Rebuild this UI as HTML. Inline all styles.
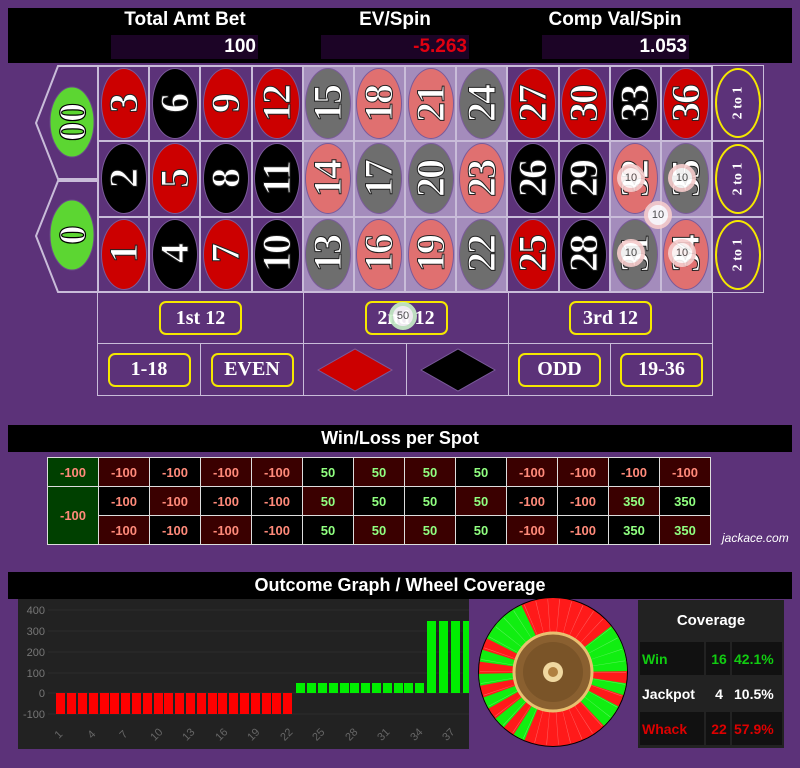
<!DOCTYPE html>
<html><head><meta charset="utf-8">
<style>
*{box-sizing:border-box;margin:0;padding:0}
body{width:800px;height:768px;background:#5c3279;position:relative;overflow:hidden;font-family:"Liberation Sans",sans-serif}
.abs{position:absolute}
.hdr{left:8px;top:8px;width:784px;height:55px;background:#000}
.lbl{color:#fff;font-weight:bold;font-size:19px;top:9px;text-align:center}
.val{top:35px;height:24px;background:#1c0426;color:#fff;font-weight:bold;font-size:19px;text-align:right;line-height:24px;padding-right:2px}
.grid{left:97px;top:65px;width:616px;height:228px;display:grid;grid-template-columns:repeat(12,1fr);grid-template-rows:repeat(3,1fr);border:1px solid #c9bcd9}
.c{border:1px solid #c9bcd9;display:flex;align-items:center;justify-content:center}
.c.l{background:#a48cbc}
.ov{width:46px;height:71px;border-radius:50%;display:flex;align-items:center;justify-content:center;border:1px solid #7a5a9a}
.r{background:#cc0000}.b{background:#000}.lr{background:#e07070}.lb{background:#6e6e6e}
.ov span{transform:rotate(-90deg);font-family:"Liberation Serif",serif;font-weight:bold;font-size:40px;line-height:40px;color:#fff;-webkit-text-stroke:1px #222;letter-spacing:-2px;white-space:nowrap}
.two{left:712px;width:52px;height:76px;border:1px solid #c9bcd9;display:flex;align-items:center;justify-content:center}
.two div{width:46px;height:70px;border:2px solid #f5e800;border-radius:50%;display:flex;align-items:center;justify-content:center}
.two span{transform:rotate(-90deg);font-family:"Liberation Serif",serif;font-weight:bold;font-size:14px;color:#fff;white-space:nowrap}
.bx{border:1px solid #c9bcd9;display:flex;align-items:center;justify-content:center}
.yb{border:2px solid #f5e800;border-radius:7px;color:#fff;font-family:"Liberation Serif",serif;font-weight:bold;font-size:20px;height:34px;display:flex;align-items:center;justify-content:center}
.chip{width:28px;height:28px;border-radius:50%;background:#fff;border:4px solid #f6cccc;opacity:.9;display:flex;align-items:center;justify-content:center;font-size:11px;color:#444}
.bar{background:#000;color:#fff;font-weight:bold;font-size:18px;text-align:center}
table.wl{position:absolute;left:47px;top:457px;border-collapse:collapse}
table.wl td{border:1px solid #ddd;width:51px;height:29px;text-align:center;font-size:13px;font-weight:bold}
.n{color:#ff8a7a}.p{color:#90ff80}
.R{background:#3a0000}.B{background:#000}.G{background:#004000}
.cov td{border:2px solid #222;background:#111;font-weight:bold;font-size:14px;height:35px;padding-left:2px}
</style></head><body>
<div class="abs hdr"></div>
<div class="abs lbl" style="left:100px;width:170px">Total Amt Bet</div>
<div class="abs lbl" style="left:310px;width:170px">EV/Spin</div>
<div class="abs lbl" style="left:530px;width:170px">Comp Val/Spin</div>
<div class="abs val" style="left:111px;width:147px">100</div>
<div class="abs val" style="left:321px;width:148px;color:#e00010">-5.263</div>
<div class="abs val" style="left:542px;width:147px">1.053</div>

<svg class="abs" style="left:0;top:0" width="100" height="300">
<polygon points="98,66 58,66 36,123 58,179 98,179" fill="none" stroke="#c9bcd9" stroke-width="2"/>
<polygon points="98,181 58,181 36,236 58,292 98,292" fill="none" stroke="#c9bcd9" stroke-width="2"/>
<ellipse cx="72" cy="122" rx="22" ry="35" fill="#5cd632" stroke="#6a4a8a"/>
<ellipse cx="72" cy="235" rx="22" ry="35" fill="#5cd632" stroke="#6a4a8a"/>
<text transform="translate(85,122) rotate(-90)" text-anchor="middle" font-family="Liberation Serif" font-weight="bold" font-size="38" fill="#fff" stroke="#000" stroke-width="1.2">00</text>
<text transform="translate(85,235) rotate(-90)" text-anchor="middle" font-family="Liberation Serif" font-weight="bold" font-size="38" fill="#fff" stroke="#000" stroke-width="1.2">0</text>
</svg>

<div class="abs grid">
<div class="c"><div class="ov r"><span>3</span></div></div>
<div class="c"><div class="ov b"><span>6</span></div></div>
<div class="c"><div class="ov r"><span>9</span></div></div>
<div class="c"><div class="ov r"><span>12</span></div></div>
<div class="c l"><div class="ov lb"><span>15</span></div></div>
<div class="c l"><div class="ov lr"><span>18</span></div></div>
<div class="c l"><div class="ov lr"><span>21</span></div></div>
<div class="c l"><div class="ov lb"><span>24</span></div></div>
<div class="c"><div class="ov r"><span>27</span></div></div>
<div class="c"><div class="ov r"><span>30</span></div></div>
<div class="c"><div class="ov b"><span>33</span></div></div>
<div class="c"><div class="ov r"><span>36</span></div></div>

<div class="c"><div class="ov b"><span>2</span></div></div>
<div class="c"><div class="ov r"><span>5</span></div></div>
<div class="c"><div class="ov b"><span>8</span></div></div>
<div class="c"><div class="ov b"><span>11</span></div></div>
<div class="c l"><div class="ov lr"><span>14</span></div></div>
<div class="c l"><div class="ov lb"><span>17</span></div></div>
<div class="c l"><div class="ov lb"><span>20</span></div></div>
<div class="c l"><div class="ov lr"><span>23</span></div></div>
<div class="c"><div class="ov b"><span>26</span></div></div>
<div class="c"><div class="ov b"><span>29</span></div></div>
<div class="c l"><div class="ov lr"><span>32</span></div></div>
<div class="c l"><div class="ov lb"><span>35</span></div></div>

<div class="c"><div class="ov r"><span>1</span></div></div>
<div class="c"><div class="ov b"><span>4</span></div></div>
<div class="c"><div class="ov r"><span>7</span></div></div>
<div class="c"><div class="ov b"><span>10</span></div></div>
<div class="c l"><div class="ov lb"><span>13</span></div></div>
<div class="c l"><div class="ov lr"><span>16</span></div></div>
<div class="c l"><div class="ov lr"><span>19</span></div></div>
<div class="c l"><div class="ov lb"><span>22</span></div></div>
<div class="c"><div class="ov r"><span>25</span></div></div>
<div class="c"><div class="ov b"><span>28</span></div></div>
<div class="c l"><div class="ov lb"><span>31</span></div></div>
<div class="c l"><div class="ov lr"><span>34</span></div></div>
</div>
<div class="abs two" style="top:65px"><div><span>2 to 1</span></div></div>
<div class="abs two" style="top:141px"><div><span>2 to 1</span></div></div>
<div class="abs two" style="top:217px"><div><span>2 to 1</span></div></div>

<div class="abs bx" style="left:97px;top:292px;width:207px;height:52px"><div class="yb" style="width:83px">1st 12</div></div>
<div class="abs bx" style="left:303px;top:292px;width:206px;height:52px"><div class="yb" style="width:83px">2nd 12</div></div>
<div class="abs bx" style="left:508px;top:292px;width:205px;height:52px"><div class="yb" style="width:83px">3rd 12</div></div>
<div class="abs bx" style="left:97px;top:343px;width:104px;height:53px"><div class="yb" style="width:83px">1-18</div></div>
<div class="abs bx" style="left:200px;top:343px;width:104px;height:53px"><div class="yb" style="width:83px">EVEN</div></div>
<div class="abs bx" style="left:303px;top:343px;width:104px;height:53px"><svg width="76" height="44"><polygon points="1,22 38,1 75,22 38,43" fill="#cc0000" stroke="#7a5a9a"/></svg></div>
<div class="abs bx" style="left:406px;top:343px;width:103px;height:53px"><svg width="76" height="44"><polygon points="1,22 38,1 75,22 38,43" fill="#000" stroke="#7a5a9a"/></svg></div>
<div class="abs bx" style="left:508px;top:343px;width:103px;height:53px"><div class="yb" style="width:83px">ODD</div></div>
<div class="abs bx" style="left:610px;top:343px;width:103px;height:53px"><div class="yb" style="width:83px">19-36</div></div>

<div class="abs chip" style="left:617px;top:164px">10</div>
<div class="abs chip" style="left:668px;top:164px">10</div>
<div class="abs chip" style="left:644px;top:201px">10</div>
<div class="abs chip" style="left:617px;top:239px">10</div>
<div class="abs chip" style="left:668px;top:239px">10</div>
<div class="abs chip" style="left:389px;top:302px;border-color:#c8f0c8">50</div>

<div class="abs bar" style="left:8px;top:425px;width:784px;height:27px;line-height:27px">Win/Loss per Spot</div>
<table class="wl">
<tr><td class="G n">-100</td><td class="R n">-100</td><td class="B n">-100</td><td class="R n">-100</td><td class="R n">-100</td><td class="B p">50</td><td class="R p">50</td><td class="R p">50</td><td class="B p">50</td><td class="R n">-100</td><td class="R n">-100</td><td class="B n">-100</td><td class="R n">-100</td></tr>
<tr><td class="G n" rowspan="2" style="border-top:1px solid #ddd">-100</td><td class="B n">-100</td><td class="R n">-100</td><td class="B n">-100</td><td class="B n">-100</td><td class="R p">50</td><td class="B p">50</td><td class="B p">50</td><td class="R p">50</td><td class="B n">-100</td><td class="B n">-100</td><td class="R p">350</td><td class="B p">350</td></tr>
<tr><td class="R n">-100</td><td class="B n">-100</td><td class="R n">-100</td><td class="B n">-100</td><td class="B p">50</td><td class="R p">50</td><td class="R p">50</td><td class="B p">50</td><td class="R n">-100</td><td class="B n">-100</td><td class="B p">350</td><td class="R p">350</td></tr>
</table>
<div class="abs" style="left:722px;top:531px;color:#fff;font-style:italic;font-size:12px">jackace.com</div>

<div class="abs bar" style="left:8px;top:572px;width:784px;height:27px;line-height:27px">Outcome Graph / Wheel Coverage</div>
<svg class="abs" style="left:18px;top:599px" width="451" height="150">
<rect width="451" height="150" fill="#222"/>
<g stroke="#2c2c2c" stroke-width="1">
<line x1="30" y1="11" x2="451" y2="11"/><line x1="30" y1="32" x2="451" y2="32"/><line x1="30" y1="53" x2="451" y2="53"/><line x1="30" y1="74" x2="451" y2="74"/><line x1="30" y1="94" x2="451" y2="94"/><line x1="30" y1="115" x2="451" y2="115"/>
</g>
<g font-size="11" fill="#777" font-family="Liberation Sans" text-anchor="end">
<text x="27" y="15">400</text><text x="27" y="36">300</text><text x="27" y="57">200</text><text x="27" y="78">100</text><text x="27" y="98">0</text><text x="27" y="119">-100</text>
</g>
<g fill="#ff0000">
<rect x="38" y="94" width="9" height="21"/><rect x="49" y="94" width="9" height="21"/><rect x="60" y="94" width="9" height="21"/><rect x="71" y="94" width="9" height="21"/><rect x="82" y="94" width="9" height="21"/><rect x="92" y="94" width="9" height="21"/><rect x="103" y="94" width="9" height="21"/><rect x="114" y="94" width="9" height="21"/><rect x="125" y="94" width="9" height="21"/><rect x="136" y="94" width="9" height="21"/><rect x="146" y="94" width="9" height="21"/><rect x="157" y="94" width="9" height="21"/><rect x="168" y="94" width="9" height="21"/><rect x="179" y="94" width="9" height="21"/><rect x="190" y="94" width="9" height="21"/><rect x="200" y="94" width="9" height="21"/><rect x="211" y="94" width="9" height="21"/><rect x="222" y="94" width="9" height="21"/><rect x="233" y="94" width="9" height="21"/><rect x="244" y="94" width="9" height="21"/><rect x="254" y="94" width="9" height="21"/><rect x="265" y="94" width="9" height="21"/>
</g>
<g fill="#00ee00">
<rect x="278" y="84" width="9" height="10"/><rect x="289" y="84" width="9" height="10"/><rect x="300" y="84" width="9" height="10"/><rect x="311" y="84" width="9" height="10"/><rect x="322" y="84" width="9" height="10"/><rect x="332" y="84" width="9" height="10"/><rect x="343" y="84" width="9" height="10"/><rect x="354" y="84" width="9" height="10"/><rect x="365" y="84" width="9" height="10"/><rect x="376" y="84" width="9" height="10"/><rect x="386" y="84" width="9" height="10"/><rect x="397" y="84" width="9" height="10"/>
<rect x="409" y="22" width="9" height="72"/><rect x="421" y="22" width="9" height="72"/><rect x="433" y="22" width="9" height="72"/><rect x="445" y="22" width="6" height="72"/>
</g>
<g font-size="11" fill="#666" font-family="Liberation Sans" text-anchor="middle">
<text transform="translate(43,138) rotate(-45)">1</text><text transform="translate(76,138) rotate(-45)">4</text><text transform="translate(108,138) rotate(-45)">7</text><text transform="translate(141,138) rotate(-45)">10</text><text transform="translate(173,138) rotate(-45)">13</text><text transform="translate(206,138) rotate(-45)">16</text><text transform="translate(238,138) rotate(-45)">19</text><text transform="translate(271,138) rotate(-45)">22</text><text transform="translate(303,138) rotate(-45)">25</text><text transform="translate(336,138) rotate(-45)">28</text><text transform="translate(368,138) rotate(-45)">31</text><text transform="translate(401,138) rotate(-45)">34</text><text transform="translate(433,138) rotate(-45)">37</text>
</g>
</svg>

<svg class="abs" style="left:476px;top:595px" width="155" height="155">
<circle cx="77" cy="77" r="75" fill="#000"/>
<circle cx="77" cy="77" r="56" fill="none" stroke="#ff1a1a" stroke-width="36"/>
<circle cx="77" cy="77" r="56" fill="none" stroke="#11ee11" stroke-width="36" transform="rotate(-95 77 77)" stroke-dasharray="0 55.3 36.9 9.2 9.2 9.2 18.4 64.6 9.2 9.2 9.2 9.2 9.2 9.2 9.2 9.2 9.2 9.2 36.9 18.4"/>
<circle cx="77" cy="77" r="56" fill="none" stroke="#fff" stroke-opacity="0.3" stroke-width="34" stroke-dasharray="0.5 8.76"/>
<circle cx="77" cy="77" r="39" fill="#8a6030" stroke="#e8c070" stroke-width="3"/>
<circle cx="77" cy="77" r="30" fill="#7a5428"/>
<circle cx="77" cy="77" r="10" fill="#f0d8a0"/><circle cx="77" cy="77" r="5" fill="#b08040"/>
</svg>

<div class="abs" style="left:638px;top:600px;width:146px;height:148px;background:#222">
<div style="color:#fff;font-weight:bold;font-size:15px;text-align:center;margin-top:12px;height:28px">Coverage</div>
<table class="cov" style="border-collapse:collapse;width:146px">
<tr><td style="color:#11cc11;width:66px">Win</td><td style="color:#11cc11;width:26px;text-align:center">16</td><td style="color:#11cc11">42.1%</td></tr>
<tr><td style="color:#fff;background:#222">Jackpot</td><td style="color:#fff;background:#222;text-align:center">4</td><td style="color:#fff;background:#222">10.5%</td></tr>
<tr><td style="color:#dd0000">Whack</td><td style="color:#dd0000;text-align:center">22</td><td style="color:#dd0000">57.9%</td></tr>
</table>
</div>
</body></html>
